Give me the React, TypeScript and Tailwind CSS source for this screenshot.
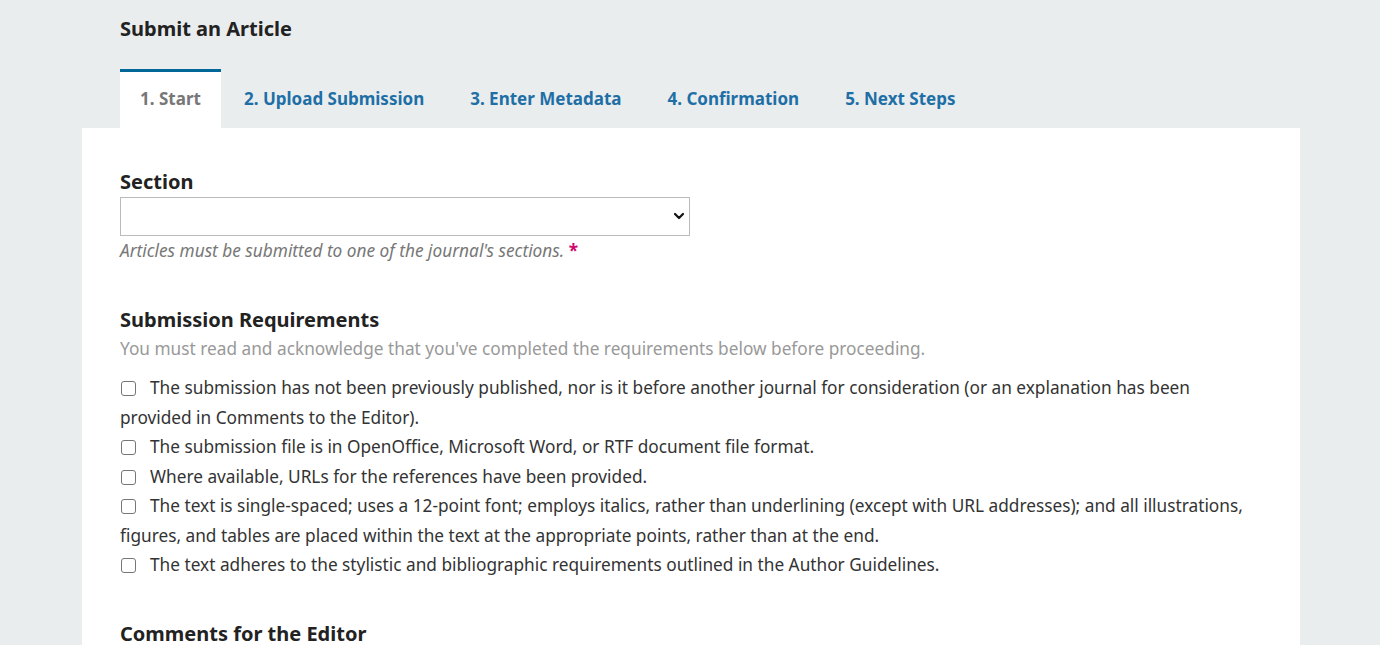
import React from "react";

const items = [
  "The submission has not been previously published, nor is it before another journal for consideration (or an explanation has been provided in Comments to the Editor).",
  "The submission file is in OpenOffice, Microsoft Word, or RTF document file format.",
  "Where available, URLs for the references have been provided.",
  "The text is single-spaced; uses a 12-point font; employs italics, rather than underlining (except with URL addresses); and all illustrations, figures, and tables are placed within the text at the appropriate points, rather than at the end.",
  "The text adheres to the stylistic and bibliographic requirements outlined in the Author Guidelines.",
];

const tabs = ["2. Upload Submission", "3. Enter Metadata", "4. Confirmation", "5. Next Steps"];

export default function App() {
  return (
    <div
      className="min-h-[645px] bg-[#eaedee] pl-[82px] pr-[80px]"
      style={{ fontFamily: '"Noto Sans", sans-serif' }}
    >
      <div className="pl-[38px] pt-[16px]">
        <h1 className="text-[20px] leading-[26px] font-bold text-[#222]">Submit an Article</h1>
        <div className="mt-[27px] flex items-end">
          <div className="h-[59px] w-[101px] border-t-[3px] border-[#006798] bg-white flex items-center justify-center pb-[2px] text-[17px] font-bold text-[#777]">
            1. Start
          </div>
          {tabs.map((t) => (
            <div
              key={t}
              className="h-[59px] pt-[1px] px-[23px] flex items-center text-[17px] font-bold text-[#1e6fa6]"
            >
              {t}
            </div>
          ))}
        </div>
      </div>
      <div className="bg-white pl-[38px] pr-[40px] pt-[41px] pb-[20px] text-[#333]">
        <div className="text-[20px] leading-[26px] font-bold text-[#222]">Section</div>
        <div className="mt-[2px] relative w-[570px] h-[39px] border border-[#bbb] bg-white">
          <svg
            className="absolute right-[4px] top-[13px]"
            width="12"
            height="10"
            viewBox="0 0 12 10"
          >
            <path d="M2 3 L6 7 L10 3" fill="none" stroke="#111" strokeWidth="2.2" strokeLinecap="round" strokeLinejoin="round" />
          </svg>
        </div>
        <div className="mt-[3px] text-[17.25px] leading-[24px] italic text-[#777]">
          Articles must be submitted to one of the journal's sections.{" "}
          <span className="text-[#d00a6c] not-italic font-bold">*</span>
        </div>

        <div className="mt-[44px] text-[20px] leading-[26px] font-bold text-[#222]">Submission Requirements</div>
        <div className="mt-[4px] text-[17.25px] leading-[24px] text-[#999]">
          You must read and acknowledge that you've completed the requirements below before proceeding.
        </div>
        <ul className="mt-[12px] text-[17.25px] leading-[29.5px] text-[#333]">
          {items.map((t) => (
            <li key={t}>
              <span className="inline-block align-[-2px] w-[15px] h-[15px] border border-[#767676] rounded-[3px] bg-white mr-[14px] ml-[1px]" />
              {t}
            </li>
          ))}
        </ul>
        <div className="mt-[41px] text-[20px] leading-[26px] font-bold text-[#222]">Comments for the Editor</div>
        <div className="h-[200px]" />
      </div>
    </div>
  );
}
